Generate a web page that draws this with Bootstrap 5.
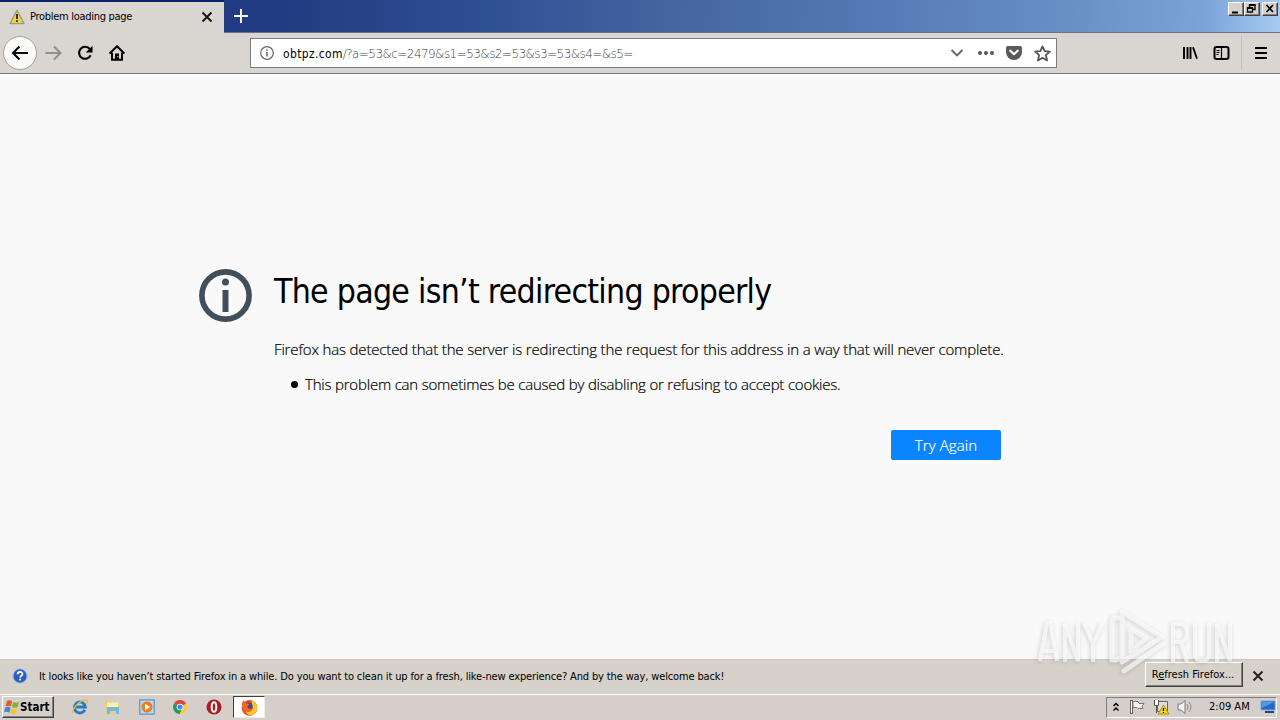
<!DOCTYPE html>
<html lang="en">
<head>
<meta charset="utf-8">
<meta name="viewport" content="width=device-width, initial-scale=1">
<title>Problem loading page</title>
<link href="https://cdn.jsdelivr.net/npm/bootstrap@5.3.0/dist/css/bootstrap.min.css" rel="stylesheet">
<style>
body{width:1280px;height:720px;overflow:hidden;background:#f9f9f9;color:#000;font-family:"DejaVu Sans Condensed","DejaVu Sans",sans-serif;font-stretch:condensed;font-size:11px;line-height:14px}
svg{display:block;flex:none}
.text-nowrap{flex:none}
.titlebar{height:33px;background:linear-gradient(92deg,#1f3a80 0,#213c82 22%,#2f4f94 38%,#44659f 52%,#5579b4 68%,#6a90c8 84%,#7ba3d8 94%,#a6caf0 100%);border-bottom:1px solid #6c7484}
.tab-on{width:224px;height:33px;background:#d9d5d0;border-top:2px solid #0a246a;padding:0 11px 2px 9px}
.tab-label{margin-left:5px;letter-spacing:-.29px}
.winbtn{width:16px;height:14px;background:#d6d2cb;border:1px solid;border-color:#fff #404040 #404040 #fff;box-shadow:inset -1px -1px #808080}
.toolbar{height:41px;background:#d9d5d0;border-bottom:1px solid #77777a;padding:0 12px 0 3px}
.back{width:34px;height:34px;border-radius:50%;background:#f9f9f8;border:1px solid #a5a29d}
.urlbar{width:807px;height:30px;margin-left:125px;background:#fff;border:1px solid #7c7c7c;padding:0 5px 0 9px}
.url{font-size:12px;margin:2px 0 0 9px;color:#444;font-family:"DejaVu Sans",sans-serif;font-weight:200;font-stretch:normal}
.query{letter-spacing:-.56px}
.host{color:#000;letter-spacing:.34px;font-weight:400;font-family:"DejaVu Sans Condensed","DejaVu Sans",sans-serif;font-stretch:condensed}
.vline{width:1px;height:34px;background:#c3bfba}
.page{height:585px;padding:195px 0 0 199px}
.page-text{width:727px;margin-left:22px}
h1.headline{font-size:33.5px;line-height:40px;margin:3px 0 0;letter-spacing:-.72px;font-weight:400}
.copy{font-size:15px;line-height:20px;letter-spacing:-.152px;font-family:"Open Sans",sans-serif;font-weight:300;font-stretch:normal;-webkit-text-stroke:.2px #000}
.c2{letter-spacing:-.2px}
.dot{width:7px;height:7px;border-radius:50%;background:#000;margin:1px 7px 0 17px}
.btn.again{width:110px;height:30px;background:#0a84ff;color:#fff;border:0;border-radius:2px;padding:0;font:300 15px/30px "Open Sans",sans-serif;letter-spacing:.1px;-webkit-text-stroke:.2px #fff}
.notice{height:35px;background:#d6d1c9;border-top:1px solid #cbc7c0;padding:0 16px 1px 12px}
.note{letter-spacing:-.14px}
.btn.refresh{width:98px;height:25px;background:#d6d2ca;border:1px solid;border-color:#fff #404040 #404040 #fff;box-shadow:inset -1px -1px #808080;border-radius:0;padding:0 2px 0 0;font-size:11px;line-height:22px;color:#000}
.taskbar{height:26px;background:#d6cec8;border-top:1px solid #fff;padding:0 3px 1px 2px}
.start{width:52px;height:22px;border:1px solid;border-color:#fff #404040 #404040 #fff;box-shadow:inset -1px -1px #808080;font-weight:bold;padding-left:1px}
.startlabel{font-size:11.5px}
.task-on{width:32px;height:22px;background:#fff;border:1px solid;border-color:#404040 #eee #eee #404040}
.tray{width:171px;height:21px;border:1px solid;border-color:#808080 #fff #fff #808080;padding-left:5px}
.watermark{left:1036px;top:606px;filter:drop-shadow(-1px 1px 2px rgba(0,0,0,.24))}
</style>
</head>
<body>
<div class="d-flex titlebar">
  <div class="tab-on d-flex align-items-center">
    <svg width="16" height="16" viewBox="0 0 16 16"><path d="M8 1.2 15 14.6H1Z" fill="#e6d63c" stroke="#9b9786" stroke-width="1.3" stroke-linejoin="round"/><path d="M8 5v5" stroke="#222" stroke-width="1.8"/><path d="M8 11.3v1.7" stroke="#222" stroke-width="1.8"/></svg>
    <span class="tab-label text-nowrap">Problem loading page</span>
    <svg class="ms-auto" width="12" height="12" viewBox="0 0 12 12"><path d="M1.5 1.5l9 9m0-9l-9 9" stroke="#111" stroke-width="1.8"/></svg>
  </div>
  <svg class="ms-2 mt-2" width="16" height="16" viewBox="0 0 16 16"><path d="M9 1v14M2 8h14" stroke="#fff" stroke-width="2"/></svg>
  <div class="d-flex ms-auto" style="padding:2px 2px 0 0">
    <div class="winbtn"><svg width="14" height="12"><path d="M3 9.5h6" stroke="#000" stroke-width="2"/></svg></div>
    <div class="winbtn"><svg width="14" height="12"><path d="M4.500 4V2h5.500v4.500H8M2.500 5h5v4h-5z" fill="none" stroke="#000" stroke-width="1.300"/><path d="M4 2h6.500M2 5h6" stroke="#000" stroke-width="1.800"/></svg></div>
    <div class="winbtn" style="margin-left:2px"><svg width="14" height="12"><path d="M3.500 2l6.500 7M10 2L3.500 9" stroke="#000" stroke-width="1.700"/></svg></div>
  </div>
</div>
<div class="toolbar d-flex align-items-center">
  <div class="back d-flex align-items-center justify-content-center"><svg width="18" height="16" viewBox="0 0 18 16"><path d="M17 8H2M8.500 1.500L2 8l6.500 6.500" fill="none" stroke="#000" stroke-width="2.100"/></svg></div>
  <svg style="margin-left:8px" width="18" height="16" viewBox="0 0 18 16"><path d="M.5 8H15M9 1.500L15.500 8 9 14.500" fill="none" stroke="#918e8a" stroke-width="2"/></svg>
  <svg style="margin-left:14px" width="16" height="16" viewBox="0 0 16 16"><path d="M12.800 4A6 6 0 1 0 13.600 10.200" fill="none" stroke="#000" stroke-width="2.100"/><path d="M15.500.7v6.800H8.700Z"/></svg>
  <svg style="margin-left:16px" width="16" height="16" viewBox="0 0 16 16"><path d="M.6 8.500L8 1.200l7.400 7.300" fill="none" stroke="#000" stroke-width="2"/><path d="M3 7.500V14.800h10V7.500" fill="none" stroke="#000" stroke-width="2"/><path d="M6 8.500h4V15H6z"/><path d="M8.800 11v1.200" stroke="#ddd"/></svg>
  <div class="urlbar d-flex align-items-center">
    <svg width="14" height="14" viewBox="0 0 14 14"><circle cx="7" cy="7" r="6.300" fill="none" stroke="#666" stroke-width="1.200"/><path d="M7 6v4.500M7 3.300v1.500" stroke="#666" stroke-width="1.500"/></svg>
    <span class="url text-nowrap"><span class="host">obtpz.com</span><span class="query">/?a=53&amp;c=2479&amp;s1=53&amp;s2=53&amp;s3=53&amp;s4=&amp;s5=</span></span>
    <svg class="ms-auto" width="14" height="10" viewBox="0 0 14 10"><path d="M1.500 2L7 7.500 12.500 2" fill="none" stroke="#666" stroke-width="1.900"/></svg>
    <svg style="margin-left:13px" width="18" height="6" fill="#555"><circle cx="3" cy="3" r="2"/><circle cx="9" cy="3" r="2"/><circle cx="15" cy="3" r="2"/></svg>
    <svg style="margin-left:11px" width="16" height="16" viewBox="0 0 16 16"><path d="M1.800 1h12.400q1.800 0 1.800 1.800V7a8 8 0 0 1-16 0V2.800Q0 1 1.800 1Z" fill="#5a5a5c"/><path d="M4.300 5.700L8 9.200l3.700-3.500" fill="none" stroke="#fff" stroke-width="2.100" stroke-linecap="round" stroke-linejoin="round"/></svg>
    <svg style="margin-left:12px" width="17" height="17" viewBox="0 0 16 16"><path d="M8 1.300l2 4.500 4.900.5-3.700 3.300 1.100 4.900L8 12l-4.300 2.500 1.100-4.900L1.100 6.300 6 5.800Z" fill="none" stroke="#555" stroke-width="1.700" stroke-linejoin="round"/></svg>
  </div>
  <svg class="ms-auto" width="16" height="16" viewBox="0 0 16 16"><path d="M2 2v12M5.500 2v12M8.500 2v12M11 2.200l4 11.600" stroke="#000" stroke-width="1.900"/></svg>
  <svg style="margin-left:15px" width="17" height="16" viewBox="0 0 17 16"><rect x="1.500" y="2" width="14" height="12" rx="2" fill="none" stroke="#000" stroke-width="2"/><path d="M8.500 2v12M3.500 5.500h3M3.500 7.500h3M3.500 9.500h2" stroke="#000" stroke-width="1.200"/></svg>
  <div class="vline" style="margin-left:11px"></div>
  <svg style="margin-left:12px" width="14" height="14"><path d="M1 2h12M1 7h12M1 12h12" stroke="#000" stroke-width="2"/></svg>
</div>
<main class="page d-flex align-items-start">
  <svg width="53" height="53" viewBox="0 0 53 53"><circle cx="26.500" cy="26.500" r="23.600" fill="none" stroke="#424e5a" stroke-width="5.600"/><circle cx="26.500" cy="13" r="3.500" fill="#424e5a"/><path d="M26.500 21v22" stroke="#424e5a" stroke-width="6"/></svg>
  <div class="page-text">
    <h1 class="headline text-nowrap"><span>The page isn’t redirecting properly</span></h1>
    <div class="copy text-nowrap" style="margin-top:27px"><span class="c1">Firefox has detected that the server is redirecting the request for this address in a way that will never complete.</span></div>
    <div class="copy d-flex align-items-center text-nowrap" style="margin-top:15px"><i class="dot"></i><span class="c2">This problem can sometimes be caused by disabling or refusing to accept cookies.</span></div>
    <div class="text-end" style="margin-top:36px"><button class="btn again">Try Again</button></div>
  </div>
</main>
<div class="notice d-flex align-items-center">
  <svg width="16" height="16" viewBox="0 0 16 16" style="margin-bottom:1px"><circle cx="8" cy="8" r="7.300" fill="#2b5fc0" stroke="#b9cbe8" stroke-width="1.300"/><path d="M5.600 6.200C5.600 3.300 10.500 3.300 10.500 6c0 1.700-2.400 1.700-2.400 3.500M8.100 10.800v1.800" fill="none" stroke="#fff" stroke-width="1.800"/></svg>
  <span class="note text-nowrap" style="margin-left:11px">It looks like you haven’t started Firefox in a while. Do you want to clean it up for a fresh, like-new experience? And by the way, welcome back!</span>
  <button class="btn refresh ms-auto text-nowrap mb-1" style="margin-right:9px">R<u>e</u>fresh Firefox...</button>
  <svg width="12" height="12" viewBox="0 0 12 12" style="margin-bottom:1px"><path d="M1.500 1.500l9 9m0-9l-9 9" stroke="#222" stroke-width="2"/></svg>
</div>
<div class="taskbar d-flex align-items-center">
  <div class="start d-flex align-items-center"><svg width="16" height="16" viewBox="0 0 16 16"><path d="M3 2q3-1.500 5 .3L7 7.500Q5 6 1.500 7.300Z" fill="#e65a28"/><path d="M9 3q3 1.500 6 0l-1.400 5q-3 1.300-5.600 0Z" fill="#7db53c"/><path d="M1.300 8.500q3-1.500 5.300.2l-1.200 5Q3 12 0 13.300Z" fill="#4b83c9"/><path d="M7.700 9.300q3 1.500 5.700 0l-1.400 5q-3 1.200-5.600 0Z" fill="#f4c52f"/></svg><span class="startlabel">Start</span></div>
  <svg style="margin-left:18px" width="16" height="16" viewBox="0 0 16 16"><path d="M12.800 10.800A5.500 5.500 0 1 1 13.300 8H4" fill="none" stroke="#2479c8" stroke-width="2.800"/><path d="M1 14.500C-.5 10 9-.5 14.500 1.200 16 2 15 4 14.500 5" fill="none" stroke="#e1bd43" stroke-width="1.400"/></svg>
  <svg style="margin-left:17px" width="16" height="16" viewBox="0 0 16 16"><path d="M1 2h5l1 2h7v10H1Z" fill="#e7cd72"/><path d="M2 3.500h11V8H2Z" fill="#fbf0ae"/><path d="M2 15V9q0-1 1-1h10q1 0 1 1v6h-3v-3H5v3Z" fill="#70b8df"/></svg>
  <svg style="margin-left:18px" width="16" height="16" viewBox="0 0 16 16"><path d="M.8.8h14.400v14.400H.8Z" fill="#bcd8f1" stroke="#5b91ca" stroke-width="1.200"/><circle cx="8" cy="8" r="5.500" fill="#f07e16"/><path d="M6 4.800L11.300 8 6 11.200Z" fill="#fff"/></svg>
  <svg style="margin-left:18px" width="14" height="14" viewBox="0 0 16 16"><path d="M8 8L1.100 4A8 8 0 0 1 15 4.200Z" fill="#dc4637"/><path d="M8 8L1.100 4A8 8 0 0 0 7.600 16L11 9Z" fill="#259b57"/><path d="M8 8L15 4.200A8 8 0 0 1 7.600 16L11 9Z" fill="#f7cb39"/><circle cx="8" cy="8" r="3.800" fill="#fff"/><circle cx="8" cy="8" r="2.900" fill="#4687ed"/></svg>
  <svg style="margin-left:19px" width="16" height="16" viewBox="0 0 16 16"><circle cx="8" cy="8" r="7.500" fill="#b11920"/><ellipse cx="8" cy="8" rx="2.300" ry="4.800" fill="none" stroke="#fff" stroke-width="2"/></svg>
  <div class="task-on d-flex align-items-center justify-content-center" style="margin-left:11px"><svg width="17" height="17" viewBox="0 0 16 16"><circle cx="8" cy="8.300" r="7.400" fill="#f04d23"/><path d="M10 1c6 3 7 9 2.500 13-4 2.500-8 .5-8-3 4 2 8-1 6-5Z" fill="#ffc72c"/><circle cx="7.300" cy="6.800" r="3.600" fill="#304fa1"/><path d="M1 4l1-3 3 3 3 1-2 2q0 3 5 2-1 4-5 3-6-2-5-8Z" fill="#f9661d"/></svg></div>
  <div class="tray d-flex align-items-center ms-auto">
    <svg width="8" height="12"><path d="M1.500 5L4 2.500 6.500 5M1.500 9.500L4 7l2.500 2.500" fill="none" stroke="#000" stroke-width="1.500"/></svg>
    <svg style="margin-left:9px" width="17" height="16"><path d="M2.500 1v14" stroke="#666" stroke-width="3"/><path d="M2.500 2v12" stroke="#fff"/><path d="M4 2.500h5l1 2h5l-2 3 1 2H9l-1-1H4Z" fill="#f5f5f5" stroke="#777"/></svg>
    <svg style="margin-left:7px" width="17" height="16"><path d="M4.500 2.500h10v10h-10Z" fill="#ddd" stroke="#666"/><path d="M1.500 1v5.500h4V1M3.500 6.500V14" fill="#fff" stroke="#555"/><path d="M10.500 6L16 15H5Z" fill="#f5d71c" stroke="#b39009"/><path d="M10.500 9v3M10.500 13v1" stroke="#111" stroke-width="1.300"/></svg>
    <svg style="margin-left:7px" width="17" height="16"><path d="M1 5h3l4-3.500v13L4 11H1Z" fill="#f5f5f5" stroke="#777"/><path d="M10 5q2 3 0 6M12 3q4 5 0 10" fill="none" stroke="#888"/></svg>
    <span class="clock text-nowrap" style="margin-left:15px">2:09 AM</span>
    <svg style="margin-left:10px" width="16" height="14"><path d="M1 1h14v9H1Z" fill="#2767c5" stroke="#77a7df"/><path d="M2 2h12L2 8Z" fill="#5a96df"/><path d="M5 12h9" stroke="#28476f" stroke-width="2"/></svg>
  </div>
</div>
<div class="watermark position-absolute">
  <svg width="200" height="70" viewBox="0 0 200 70"><g fill="none" stroke="#fff" stroke-opacity=".65" stroke-width="4"><path d="M4 55L11 17h3L21 55M7 45h11M29 56V18L42 55V17M48 17L57 38 66 17M57 38V56"/><path d="M137 56V18h6q8 0 8 9t-8 9h-6M145 36l6 20M159 17v30q0 8 7 8t7-8V17M181 56V18L194 55V17"/><path d="M82 12q-6-1-6 5V54M76 52q3 4 6 1M86 53V6L126 31 86 56M88 65L127 38M95 46V23L110 32Z" stroke-width="5" stroke-linejoin="round" stroke-linecap="round"/></g></svg>
</div>
<script src="https://cdn.jsdelivr.net/npm/bootstrap@5.3.0/dist/js/bootstrap.bundle.min.js"></script>
</body>
</html>
